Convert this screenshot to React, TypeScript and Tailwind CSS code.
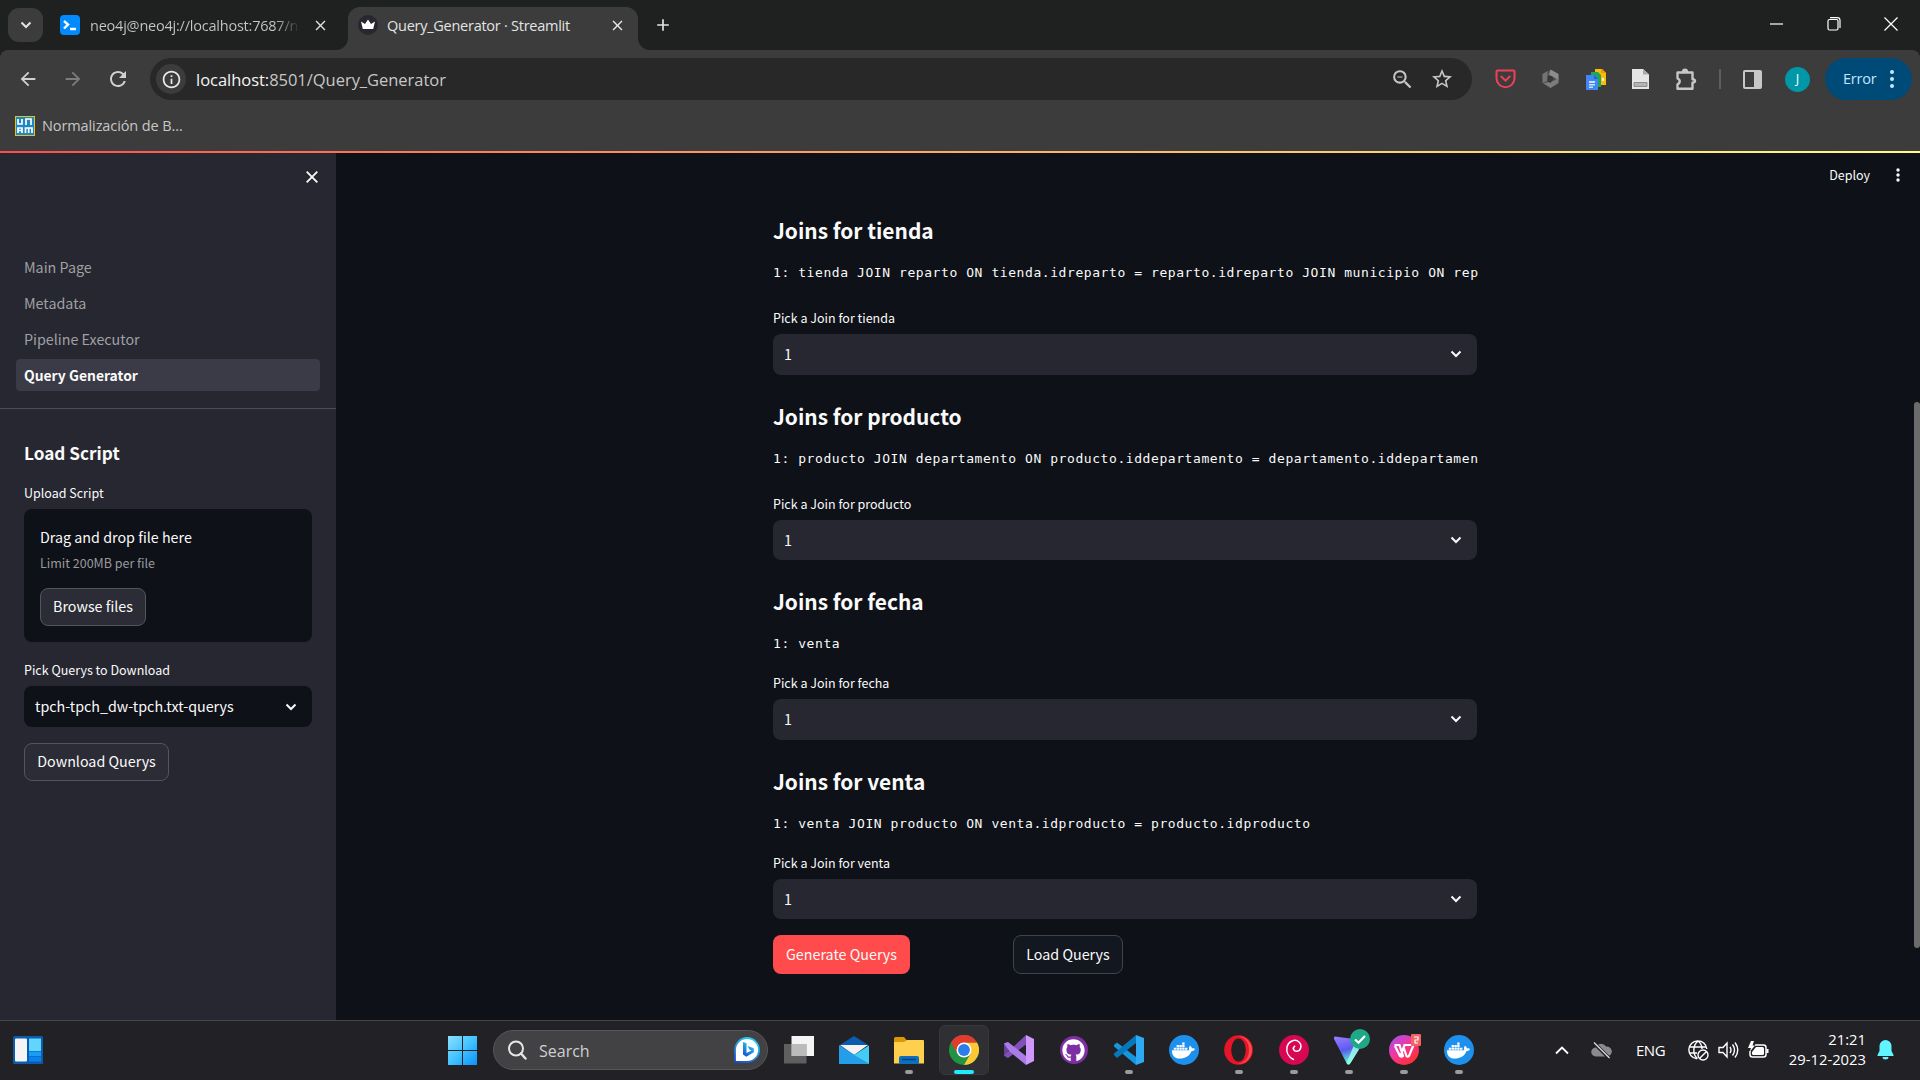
import type { ReactNode } from "react";
import { MdArrowBack, MdArrowForward, MdRefresh, MdZoomOut, MdStarBorder, MdOutlineExtension, MdInfoOutline, MdClose, MdAdd } from "react-icons/md";
import { FaDocker, FaGithub } from "react-icons/fa";

const UI = "font-['Open_Sans','Noto_Sans',sans-serif]";

function Cell({ w, children }: { w: string; children: ReactNode }) {
  return <div className={`${w} flex shrink-0 items-center justify-center`}>{children}</div>;
}

/* ---------- Browser chrome ---------- */

function TabStrip() {
  return (
    <div className="flex h-[50px] bg-[#1f2120]">
      <div className="ml-2 mt-2 flex h-[34px] w-[35px] shrink-0 items-center justify-center rounded-[11px] bg-[#3c3c3c]">
        <svg width="12" height="8" viewBox="0 0 12 8" fill="none" stroke="#e3e3e3" strokeWidth="2"><path d="M1.5 1.5 6 6l4.500-4.500" /></svg>
      </div>
      <div className="ml-[17px] flex h-[50px] w-[288px] items-center">
        <svg width="20" height="20" viewBox="0 0 20 20">
          <rect width="20" height="20" rx="4" fill="#018bff" />
          <path d="M4 6l4 3.500-4 4M10 14h6" stroke="#fff" strokeWidth="2.400" fill="none" />
        </svg>
        <div className={`${UI} ml-[10px] w-[210px] whitespace-nowrap bg-linear-to-r from-[#c7c7c7] from-88% to-transparent bg-clip-text pt-px text-[14.5px] tracking-[-0.22px] text-transparent`}>neo4j@neo4j://localhost:7687/n</div>
        <MdClose className="ml-[12px] text-[#dedede]" size={17} />
      </div>
      <div className="relative mt-[7px] flex h-[43px] w-[290px] items-center rounded-t-xl bg-[#3c3c3c] pb-[7px]">
        <svg className="absolute -left-3 bottom-0" width="12" height="12"><path d="M12 0v12H0A12 12 0 0 0 12 0" fill="#3c3c3c" /></svg>
        <svg className="absolute -right-3 bottom-0" width="12" height="12"><path d="M0 0v12h12A12 12 0 0 1 0 0" fill="#3c3c3c" /></svg>
        <svg className="ml-[10px]" width="20" height="20" viewBox="0 0 20 20">
          <circle cx="10" cy="10" r="10" fill="#262730" />
          <path d="M3 6.500 7 9l3-4.500L13 9l4-2.500-1.800 7.500H4.800z" fill="#fff" />
        </svg>
        <div className={`${UI} ml-[9px] w-[222px] whitespace-nowrap pt-px text-[14.5px] tracking-[-0.26px] text-[#e3e3e3]`}>Query_Generator · Streamlit</div>
        <MdClose className="text-[#e8e8e8]" size={17} />
      </div>
      <div className="ml-[15px] flex h-[50px] items-center"><MdAdd className="text-[#e3e3e3]" size={20} /></div>
      <div className="ml-auto mr-px flex h-[48px] items-center">
        <Cell w="w-[57px]"><svg width="13" height="2"><path d="M0 1h13" stroke="#fff" strokeWidth="1.200" /></svg></Cell>
        <Cell w="w-[57px]">
          <svg width="14" height="14" viewBox="0 0 14 14" fill="none" stroke="#fff" strokeWidth="1.200"><rect x="1" y="2.500" width="10" height="10.500" rx="1.500" /><path d="M3 .7h7.500Q13 .7 13 3.500V11" /></svg>
        </Cell>
        <Cell w="w-[57px]"><svg width="14" height="14" viewBox="0 0 14 14"><path d="M.5.500l13 13M13.500.500l-13 13" stroke="#fff" strokeWidth="1.200" /></svg></Cell>
      </div>
    </div>
  );
}

function Toolbar() {
  return (
    <div className="bg-[#1f2120]">
    <div className="flex h-[101px] flex-col rounded-t-lg bg-[#3c3c3c]">
      <div className="flex h-[58px] items-center">
        <Cell w="ml-[5px] w-[45px]"><MdArrowBack size={22} className="text-[#d0d0d0]" /></Cell>
        <Cell w="w-[45px]"><MdArrowForward size={22} className="text-[#7c7c7c]" /></Cell>
        <Cell w="w-[45px]"><MdRefresh size={24} className="text-[#d0d0d0]" /></Cell>
        <div className="ml-[10px] flex h-[42px] w-[1322px] items-center rounded-full bg-[#282828]">
          <div className="ml-[6px] flex size-[30px] items-center justify-center rounded-full bg-[#3c3c3c]"><MdInfoOutline size={21} className="text-[#e8e8e8]" /></div>
          <div className={`${UI} ml-[10px] whitespace-nowrap pt-0.5 text-[16.5px] tracking-[-0.03px] text-[#c7c7c7]`}><span className="text-[#f4f4f4]">localhost:</span>8501/Query_Generator</div>
          <Cell w="ml-auto w-[40px]"><MdZoomOut size={25} className="text-[#c7c7c7]" /></Cell>
          <Cell w="mr-[10px] w-[40px]"><MdStarBorder size={24} className="text-[#c7c7c7]" /></Cell>
        </div>
        <Cell w="ml-[11px] w-[45px]">
          <svg width="21" height="20" viewBox="0 0 21 20" fill="none" stroke="#ef4056" strokeWidth="2"><path d="M2.500 1.500h16q1 0 1 1v6.800a9 9 0 0 1-18 0V2.500q0-1 1-1z" /><path d="m6.300 7.500 4.200 4.200 4.200-4.200" strokeLinecap="round" /></svg>
        </Cell>
        <Cell w="w-[45px]">
          <svg width="19" height="20" viewBox="0 0 19 20"><path d="M9.500.5 17.500 5v9l-8 5-8-5V5z" fill="#4f4f4f" /><path d="M9.500.5 17.500 5v6L8 5.500z" fill="#8c8c8c" /><path d="M1.500 5 6.500 2v10l-5 2z" fill="#737373" /><path d="M12 12l5.500-3v5l-8 5-7-4.500z" fill="#7c7c7c" /><path d="m6.500 7 4.500 0 1.500 3-3 4-3-1.500z" fill="#383838" /></svg>
        </Cell>
        <Cell w="w-[45px]">
          <svg width="20" height="21" viewBox="0 0 20 21"><path d="M9 0h7l4 4v12H9z" fill="#fbbc05" /><path d="M15 0h1l4 4h-5z" fill="#ea9d00" /><path d="M16 9h2v3h-2z" fill="#fff3c6" /><path d="M5 3h7l3 3v12H5z" fill="#1fa463" /><path d="M0 6h8l4 4v11H0z" fill="#4285f4" /><path d="M8 6l4 4H8z" fill="#2a62c8" /><path d="M3 12h6v2H3zM3 15h6v1.500H3zM3 17.500h4V19H3z" fill="#cfe0ff" /></svg>
        </Cell>
        <Cell w="w-[45px]">
          <svg width="17" height="20" viewBox="0 0 17 20"><path d="M0 0h11l6 5.500V20H0z" fill="#e6e6e6" /><path d="M11 0l6 5.500h-6z" fill="#aaa" /><path d="M2 13.500h13v4H2z" fill="#b4b4b4" stroke="#8d8d8d" /></svg>
        </Cell>
        <Cell w="w-[46px]">
          <svg width="22" height="23" viewBox="0 0 22 23" fill="none" stroke="#c7c7c7" strokeWidth="2.400" strokeLinejoin="round"><path d="M2.500 4.500h15v6.800q2.500.300 2.500 1.700t-2.500 1.700v6.100h-15v-4.500q2.200-.900 2.200-3t-2.200-3z" /><path d="M8 3.800q.2-2 2-2t2 2z" fill="#c7c7c7" /></svg>
        </Cell>
        <Cell w="w-[21px]"><div className="h-5 w-0.5 bg-[#5e5e5e]" /></Cell>
        <Cell w="w-[45px]">
          <svg width="19" height="19" viewBox="0 0 19 19"><rect x="1" y="1" width="17" height="17" rx="1" fill="none" stroke="#c7c7c7" strokeWidth="2" /><path d="M11 1h7v17h-7z" fill="#c7c7c7" /></svg>
        </Cell>
        <Cell w="w-[45px]"><div className={`${UI} flex size-[25px] items-center justify-center rounded-full bg-[#0097a7] text-[13px] text-white`}>J</div></Cell>
        <div className="ml-[5px] flex h-[42px] w-[87px] items-center rounded-full bg-[#004a77] pb-px pl-[18px]">
          <span className={`${UI} text-[14.5px] tracking-[-0.2px] text-[#c2e7ff]`}>Error</span>
          <svg className="ml-[13px]" width="4" height="18" fill="#c2e7ff"><circle cx="2" cy="2" r="2" /><circle cx="2" cy="9" r="2" /><circle cx="2" cy="16" r="2" /></svg>
        </div>
      </div>
      <div className="flex h-[36px] items-center pl-[15px]">
        <svg width="20" height="20" viewBox="0 0 20 20"><rect x=".5" y=".5" width="19" height="19" fill="#1e88c7" stroke="#e6c229" /><path d="M3 3v5h4V3M11 9V3h5v6M3 17v-5h4v5M3 14.500h4M10.500 17v-5h6.500v5M13.700 12v5" fill="none" stroke="#fff" strokeWidth="1.700" /></svg>
        <span className={`${UI} ml-[7px] text-[14.5px] tracking-[-0.1px] text-[#c7c7c7]`}>Normalización de B...</span>
      </div>
    </div>
    </div>
  );
}

/* ---------- Streamlit app ---------- */

function Chevron() {
  return <svg width="12" height="8" viewBox="0 0 12 8" fill="none" stroke="#fafafa" strokeWidth="2"><path d="M1.500 1.500 6 6l4.500-4.500" /></svg>;
}

const navItems = ["Main Page", "Metadata", "Pipeline Executor"];

function Sidebar() {
  return (
    <aside className="flex w-[336px] shrink-0 flex-col bg-[#262730] text-[#fafafa]">
      <div className="flex h-12 items-center justify-end pr-[18px]">
        <svg width="12" height="12" viewBox="0 0 12 12"><path d="M.7.700l10.600 10.600M11.300.700.7 11.300" stroke="#fafafa" strokeWidth="1.800" /></svg>
      </div>
      <nav className="mt-[50px] flex flex-col gap-1 px-4 text-[14.3px]">
        {navItems.map((n) => (
          <div key={n} className="flex h-8 items-center px-2 text-[#a0a0a4]">{n}</div>
        ))}
        <div className="flex h-8 items-center rounded bg-[#3b3b47] px-2 text-[13.9px] font-bold">Query Generator</div>
      </nav>
      <div className="mt-[17px] h-px bg-[#4c4d56]" />
      <div className="flex flex-col items-start px-6">
        <h2 className="mt-[28px] flex h-8 items-center text-[17.2px] font-bold">Load Script</h2>
        <label className="mt-[12px] flex h-6 items-center text-[12.5px]">Upload Script</label>
        <div className="mt-[4px] flex h-[133px] w-[288px] flex-col items-start rounded-lg bg-[#0e1117] px-4 pt-4">
          <span className="flex h-6 items-center text-[14.3px]">Drag and drop file here</span>
          <span className="mt-[3px] flex h-[22px] items-center text-[12.5px] text-[#98999d]">Limit 200MB per file</span>
          <button className="mt-[14px] flex h-[38px] w-[106px] items-center justify-center rounded-lg border border-[#53545d] bg-[#2b2c36] pb-0.5 text-[14.3px]">Browse files</button>
        </div>
        <label className="mt-[16px] flex h-6 items-center text-[12.5px]">Pick Querys to Download</label>
        <div className="mt-[4px] flex h-[41px] w-[288px] items-center justify-between rounded-lg bg-[#0e1117] pl-[11px] pr-[15px] text-[14.3px]">
          <span className="pb-px">tpch-tpch_dw-tpch.txt-querys</span>
          <Chevron />
        </div>
        <button className="mt-4 flex h-[38px] w-[145px] items-center justify-center rounded-lg border border-[#53545d] bg-[#2b2c36] pb-0.5 text-[14.3px]">Download Querys</button>
      </div>
    </aside>
  );
}

const joins = [
  { name: "tienda", scroll: true, sql: "1: tienda JOIN reparto ON tienda.idreparto = reparto.idreparto JOIN municipio ON rep" },
  { name: "producto", scroll: true, sql: "1: producto JOIN departamento ON producto.iddepartamento = departamento.iddepartamen" },
  { name: "fecha", scroll: false, sql: "1: venta" },
  { name: "venta", scroll: false, sql: "1: venta JOIN producto ON venta.idproducto = producto.idproducto" },
];

function JoinBlock({ name, sql, scroll }: { name: string; sql: string; scroll: boolean }) {
  return (
    <section className="flex flex-col">
      <h3 className="flex h-10 items-center text-[20.9px] font-bold">Joins for {name}</h3>
      <div className="flex h-11 items-center whitespace-pre font-['DejaVu_Sans_Mono',monospace] text-[13px] tracking-[0.573px]">{sql}</div>
      <label className={`${scroll ? "mt-[7px]" : "mt-px"} flex h-8 items-center pt-px text-[12.5px]`}>Pick a Join for {name}</label>
      <div className="flex h-[40.5px] items-center justify-between rounded-lg bg-[#262730] pl-[11px] pr-[15px] text-[14.3px]">
        <span className="pb-px">1</span>
        <Chevron />
      </div>
    </section>
  );
}

function Main() {
  return (
    <main className="relative flex flex-1 flex-col bg-[#0e1117] text-[#fafafa]">
      <div className="flex h-[44px] items-center justify-end pr-[20px]">
        <span className="text-[12.5px]">Deploy</span>
        <svg className="ml-[26px]" width="4" height="14" fill="#fafafa"><circle cx="2" cy="2" r="1.700" /><circle cx="2" cy="7" r="1.700" /><circle cx="2" cy="12" r="1.700" /></svg>
      </div>
      <div className="ml-[437px] mt-[14px] flex w-[704px] flex-col gap-[22px]">
        {joins.map((j) => <JoinBlock key={j.name} {...j} />)}
      </div>
      <div className="ml-[437px] mt-4 flex gap-[103px] text-[14.3px]">
        <button className="flex h-[39px] w-[137px] items-center justify-center rounded-lg bg-[#ff4b4b] pb-0.5">Generate Querys</button>
        <button className="flex h-[39px] w-[110px] items-center justify-center rounded-lg border border-[#41444c] bg-[#131720] pb-0.5">Load Querys</button>
      </div>
      <div className="absolute right-0 top-[249px] h-[546px] w-[6px] rounded-full bg-[#6b6b6b]" />
    </main>
  );
}

/* ---------- Taskbar ---------- */

function WindowsIcon() {
  return (
    <svg width="29" height="29" viewBox="0 0 29 29">
      <defs><linearGradient id="win" x1="0" y1="0" x2="1" y2="1"><stop stopColor="#8be0ff" /><stop offset=".5" stopColor="#43c3ff" /><stop offset="1" stopColor="#0a92f8" /></linearGradient></defs>
      <path d="M0 0h14v14H0zM15 0h14v14H15zM0 15h14v14H0zM15 15h14v14H15z" fill="url(#win)" />
    </svg>
  );
}

function DockerIcon() {
  return <div className="flex size-[30px] items-center justify-center rounded-full bg-[#1d90ee] text-white"><FaDocker size={23} /></div>;
}

function DebianIcon() {
  return (
    <svg width="30" height="30" viewBox="0 0 30 30">
      <circle cx="15" cy="15" r="15" fill="#d70751" />
      <path d="M14.500 24.500C9.500 22 7 17 8 12 9.500 6 16 3.500 20 7c3.400 3.200 2 8.600-2 9.200-3.400.400-4.800-3-2.300-5" fill="none" stroke="#fff" strokeWidth="1.500" strokeLinecap="round" />
    </svg>
  );
}

function ChromeIcon() {
  return (
    <svg width="30" height="30" viewBox="0 0 48 48">
      <circle cx="24" cy="24" r="24" fill="#229342" />
      <path d="M24 12h20.800A24 24 0 0 1 24 48L34.400 30z" fill="#fcc934" />
      <path d="M24 12h20.800A24 24 0 0 0 3.200 12L13.600 30z" fill="#e33b2e" />
      <circle cx="24" cy="24" r="12" fill="#fff" />
      <circle cx="24" cy="24" r="9.500" fill="#2b7de9" />
    </svg>
  );
}

function TaskbarApp({ children, active, running }: { children: ReactNode; active?: boolean; running?: boolean }) {
  return (
    <div className="flex w-[55px] justify-center">
      <div className={`relative flex h-[50px] w-[50px] items-center justify-center rounded-md ${active ? "border border-[#37373b] bg-[#2f2f34]" : ""}`}>
        {children}
        {active && <div className="absolute bottom-0 h-1 w-5 rounded-full bg-[#22e8fb]" />}
        {running && <div className="absolute bottom-px h-1 w-2 rounded-full bg-[#9b9b9b]" />}
      </div>
    </div>
  );
}

function Taskbar() {
  return (
    <footer className={`${UI} flex h-[60px] items-center border-t border-[#45454a] bg-[#212126] pb-[1px] text-white`}>
      <svg className="ml-[13px]" width="30" height="28" viewBox="0 0 30 28">
        <rect width="30" height="28" rx="1.500" fill="#0c5cab" /><rect x="2" y="2.500" width="12" height="23" rx="1" fill="#f5f5f5" /><path d="M16 2.500h12V15H16z" fill="#62d5ff" /><path d="M16 15.500h12V20H16z" fill="#189cf5" /><path d="M16 20.500h12v5H16z" fill="#0883ec" />
      </svg>
      <div className="ml-[405px] mr-4"><WindowsIcon /></div>
      <div className="flex h-10 w-[275px] items-center rounded-full border border-[#56565a] bg-[#424244] px-[13px]">
        <svg width="20" height="20" viewBox="0 0 20 20" fill="none" stroke="#e6e6e6" strokeWidth="2"><circle cx="9" cy="8.500" r="7" /><path d="m14 13.500 4.500 5" strokeWidth="2.400" strokeLinecap="round" /></svg>
        <span className="ml-[12px] pt-px text-[16px] text-[#d0d0d0]">Search</span>
        <svg className="-mr-[6px] ml-auto" width="26" height="26" viewBox="0 0 26 26">
          <defs><linearGradient id="bing" x1="0" y1="1" x2=".5" y2="0"><stop stopColor="#1b48c8" /><stop offset="1" stopColor="#27c6ef" /></linearGradient></defs>
          <path d="M1 25V13A12 12 0 1 1 13 25z" fill="#fff" stroke="url(#bing)" strokeWidth="1.800" />
          <path d="m9 5 3.500 1.200V16l5-2.500-2.200-1-1.500-3.500 6 2.200v4l-7.500 4.500L9 17.500z" fill="url(#bing)" />
        </svg>
      </div>
      <div className="ml-[3px] flex">
        <TaskbarApp><svg width="30" height="28" viewBox="0 0 30 28"><path d="M7.500 0H30v20H7.500z" fill="#f4f4f4" /><path d="M0 8h22.500v19.500H0z" fill="#777" fillOpacity=".72" /><path d="M7.500 8h15v12h-15z" fill="#bbb" /></svg></TaskbarApp>
        <TaskbarApp><svg width="30" height="28" viewBox="0 0 30 28"><path d="M0 9.500 15 0l15 9.500z" fill="#0b5cad" /><path d="M1 9h28L15 19z" fill="#f3f3f3" /><path d="M0 9 30 28H0z" fill="#259eea" /><path d="M30 9.500V28L15 19z" fill="#42ccf8" /></svg></TaskbarApp>
        <TaskbarApp running><svg width="30" height="27" viewBox="0 0 30 27"><path d="M0 1.500Q0 0 1.500 0H10l3 3.500V9H0z" fill="#dc9705" /><path d="M0 5h10l3-2h16q1 0 1 1v22.500H0z" fill="#ffd04d" /><path d="M5 27v-6q0-2 2-2h16q2 0 2 2v6z" fill="#0d6fc0" /><path d="M8 22.500h14" stroke="#083f7a" strokeWidth="1.500" /></svg></TaskbarApp>
        <TaskbarApp active><ChromeIcon /></TaskbarApp>
        <TaskbarApp><svg width="30" height="30" viewBox="0 0 30 30"><path d="M0 8.500 4 7v16l-4-2.500z" fill="#65439c" /><path d="M4 23 0 20.500 22 0v9.500z" fill="#7f51b8" /><path d="M0 8.500 4 7l18 14v9L5 16z" fill="#aa7ce8" /><path d="m22 0 8 4v22l-8 4z" fill="#d098f8" /></svg></TaskbarApp>
        <TaskbarApp><div className="flex size-[28px] items-center justify-center rounded-full bg-[#7f2ea3]"><FaGithub size={23} /></div></TaskbarApp>
        <TaskbarApp running><svg width="30" height="30" viewBox="0 0 30 30"><path d="m0 10 3-2.500L22 22v8L0 11.500z" fill="#1596dd" /><path d="m0 20 3 3L22 8V0L0 18.500z" fill="#0878bd" /><path d="m22 0 8 3v24l-8 3z" fill="#2daaf3" /></svg></TaskbarApp>
        <TaskbarApp><DockerIcon /></TaskbarApp>
        <TaskbarApp running><svg width="29" height="30" viewBox="0 0 29 30"><ellipse cx="14.500" cy="15" rx="14.300" ry="14.700" fill="#e81526" /><path d="M14 1a14 14 0 0 1 0 28c8-2 11-7 11-14S22 3 14 1z" fill="#ff4a4a" /><ellipse cx="14.500" cy="15" rx="7.300" ry="11.500" fill="#212126" /></svg></TaskbarApp>
        <TaskbarApp running><DebianIcon /></TaskbarApp>
        <TaskbarApp running>
          <svg width="30" height="30" viewBox="0 0 30 30">
            <defs><linearGradient id="vpn" x1="0" y1="0" x2=".3" y2="1"><stop stopColor="#9c7dff" /><stop offset=".55" stopColor="#5b5bf0" /><stop offset="1" stopColor="#58ffd0" /></linearGradient></defs>
            <path d="M1 1.500 28 5q2 1 1 3L16.500 28q-2 3-4 0L0 4q-.7-2 1-2.500z" fill="url(#vpn)" /><path d="m20 10-7.500 18q2 3 4 0L27 11z" fill="#9dfbe6" fillOpacity=".85" />
          </svg>
          <svg className="absolute left-[26px] top-[4px]" width="20" height="20" viewBox="0 0 20 20"><circle cx="10" cy="10" r="10" fill="#1ea885" /><path d="m5 10.500 3.500 3.200L15 7" fill="none" stroke="#fff" strokeWidth="2.200" /></svg>
        </TaskbarApp>
        <TaskbarApp running>
          <svg width="30" height="30" viewBox="0 0 30 30">
            <defs><linearGradient id="wps" x1="0" y1="0" x2=".8" y2="1"><stop stopColor="#9a55ff" /><stop offset=".5" stopColor="#f4369a" /><stop offset="1" stopColor="#ff2f24" /></linearGradient></defs>
            <circle cx="15" cy="15" r="15" fill="url(#wps)" /><path d="M5.500 10h5l3.500 11q-1.500 1.500-3 0L6 11M24.500 10h-9l-4 11M24.500 10 20 21q-1.500 1.500-2.500 0l-3-9" fill="none" stroke="#fff" strokeWidth="2.200" />
          </svg>
          <svg className="absolute left-[32px] top-[9px]" width="10" height="12"><rect width="10" height="12" rx="1" fill="#f06466" /><path d="M3 3h4v3H4v3h3" fill="none" stroke="#fff" strokeWidth="1.200" /></svg>
        </TaskbarApp>
        <TaskbarApp running><DockerIcon /></TaskbarApp>
      </div>
      <div className="ml-auto flex items-center">
        <svg width="14" height="9" viewBox="0 0 14 9" fill="none" stroke="#fff" strokeWidth="1.800"><path d="m1 7.500 6-6 6 6" /></svg>
        <svg className="ml-[22px]" width="21" height="17" viewBox="0 0 21 17"><path d="M5 14.500a4.500 4.500 0 0 1-.5-9A6 6 0 0 1 15 4.500a4.700 4.700 0 0 1 1.500 10z" fill="#8b8b8e" /><path d="M3 1l15.500 15.500" stroke="#212126" strokeWidth="3.500" /><path d="M3 .5 18.500 16" stroke="#e0e0e0" strokeWidth="1.300" /></svg>
        <span className="ml-[24px] w-[29px] text-[15px] tracking-[-0.5px]">ENG</span>
        <svg className="ml-[23px]" width="21" height="21" viewBox="0 0 21 21" fill="none" stroke="#fff" strokeWidth="1.400"><path d="M9 18.800A9 9 0 1 1 18.800 9M1.500 7h17M1.500 13H9M9.500 18.500c-5-4-5-13 .5-17.500 2.500 2 4 4.500 4 8M6 4" /><circle cx="15" cy="15" r="5" /><path d="m11.500 18.500 7-7" /></svg>
        <svg className="ml-[9px]" width="21" height="20" viewBox="0 0 21 20" fill="none" stroke="#fff" strokeWidth="1.400"><path d="M1 7.500h4L9 3v14l-4-4.500H1zM12 7q2 3 0 6M14.500 4.500q4 5.500 0 11M17 2.500q5.500 7.500 0 15" /></svg>
        <svg className="ml-[9px]" width="21" height="18" viewBox="0 0 21 18"><path d="M7 4h8.500q2.500 0 2.500 2.500v7q0 2.500-2.500 2.500h-11Q2 16 2 13.500V10" fill="none" stroke="#fff" strokeWidth="1.500" /><path d="M8 6h6.500q1.500 0 1.500 1.500v5q0 1.500-1.500 1.500h-9Q4 14 4 12.500V11z" fill="#fff" /><path d="M18.500 8h2v4h-2zM3 0 0 7h3L1.500 11 7 4.500H4.500L6 0z" fill="#fff" /></svg>
        <div className="ml-[18px] w-[79px] whitespace-nowrap pb-[3px] text-right text-[14.8px] leading-5">21:21<br />29-12-2023</div>
        <svg className="ml-[11px] mr-[26px]" width="17" height="20" viewBox="0 0 17 20" fill="#60f5ff"><path d="M8.500 0a6 6 0 0 1 6 6v5l2 4v1H.5v-1l2-4V6a6 6 0 0 1 6-6zM5.500 17h6a3 2.500 0 0 1-6 0z" /></svg>
      </div>
    </footer>
  );
}

export default function App() {
  return (
    <div className="flex h-[1080px] w-[1920px] flex-col overflow-hidden bg-[#0e1117] font-['Noto_Sans_CJK_SC',sans-serif]">
      <TabStrip />
      <Toolbar />
      <div className="h-0.5 bg-linear-to-r from-[#ff4b4b] to-[#fffd80]" />
      <div className="flex min-h-0 flex-1">
        <Sidebar />
        <Main />
      </div>
      <Taskbar />
    </div>
  );
}
